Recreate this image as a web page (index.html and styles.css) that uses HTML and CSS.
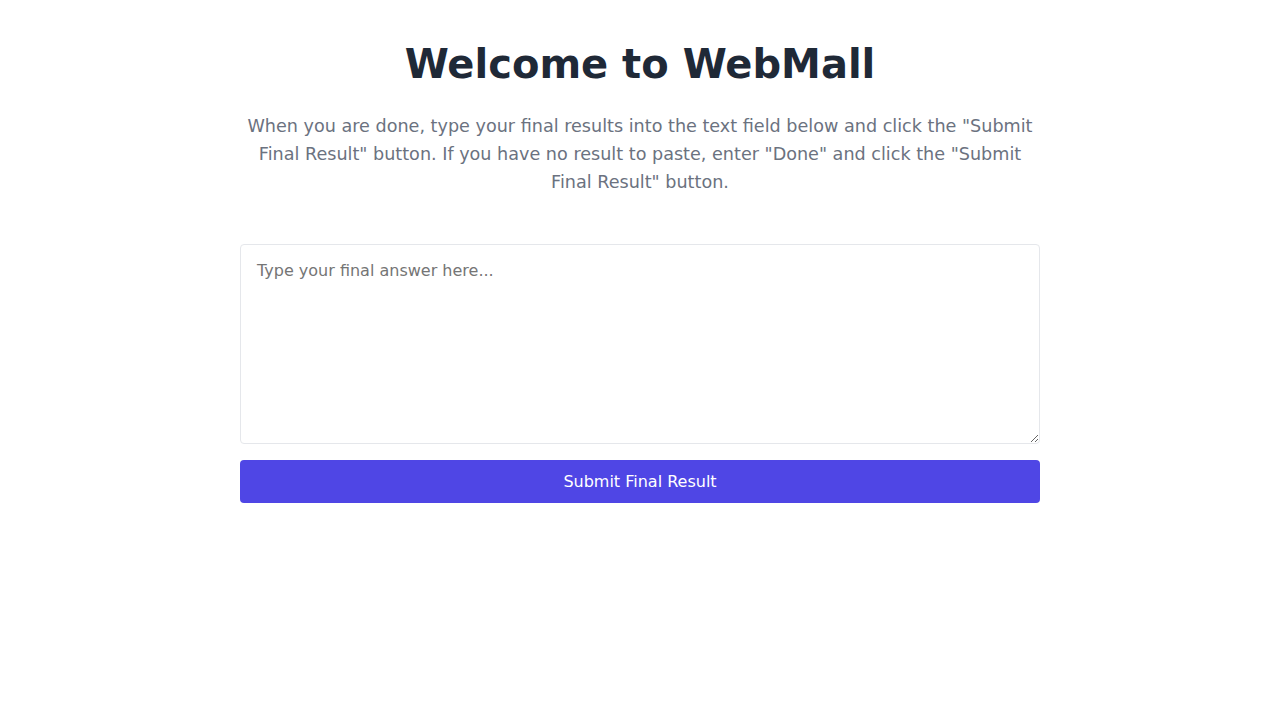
FILE: index.html
```html
<!DOCTYPE html>
<html lang="en">
<head>
<meta charset="utf-8">
<title>WebMall</title>
<link rel="stylesheet" href="styles.css">
</head>
<body>
<main class="page">
  <h1 class="title">Welcome to WebMall</h1>
  <p class="intro">When you are done, type your final results into the text field below and click the "Submit Final Result" button. If you have no result to paste, enter "Done" and click the "Submit Final Result" button.</p>
  <form class="answer-form">
    <textarea class="answer" placeholder="Type your final answer here..."></textarea>
    <button type="button" class="submit">Submit Final Result</button>
  </form>
</main>
</body>
</html>
```

FILE: styles.css
```css
* { box-sizing: border-box; }
html, body { margin: 0; padding: 0; background: #ffffff; }
body { font-family: "DejaVu Sans", sans-serif; }
.page {
  width: 800px;
  margin: 0 auto;
  padding-top: 40px;
  display: flex;
  flex-direction: column;
  align-items: stretch;
}
.title {
  margin: 0;
  text-align: center;
  font-size: 40px;
  line-height: 48px;
  font-weight: 700;
  color: #1f2937;
}
.intro {
  margin: 24px 0 0;
  text-align: center;
  font-size: 17.6px;
  line-height: 28px;
  color: #6b7280;
}
.answer-form {
  margin-top: 48px;
  display: flex;
  flex-direction: column;
  gap: 16px;
}
.answer {
  display: block;
  width: 100%;
  height: 200px;
  padding: 16px;
  border: 1px solid #e5e7eb;
  border-radius: 4px;
  font-family: "DejaVu Sans", sans-serif;
  font-size: 16px;
  line-height: normal;
  color: #1f2937;
  resize: vertical;
  outline: none;
}
.answer::placeholder { color: #757575; }
.submit {
  height: 43px;
  border: none;
  border-radius: 4px;
  background: #4f46e5;
  color: #ffffff;
  font-family: "DejaVu Sans", sans-serif;
  font-size: 16px;
  cursor: pointer;
}
```
